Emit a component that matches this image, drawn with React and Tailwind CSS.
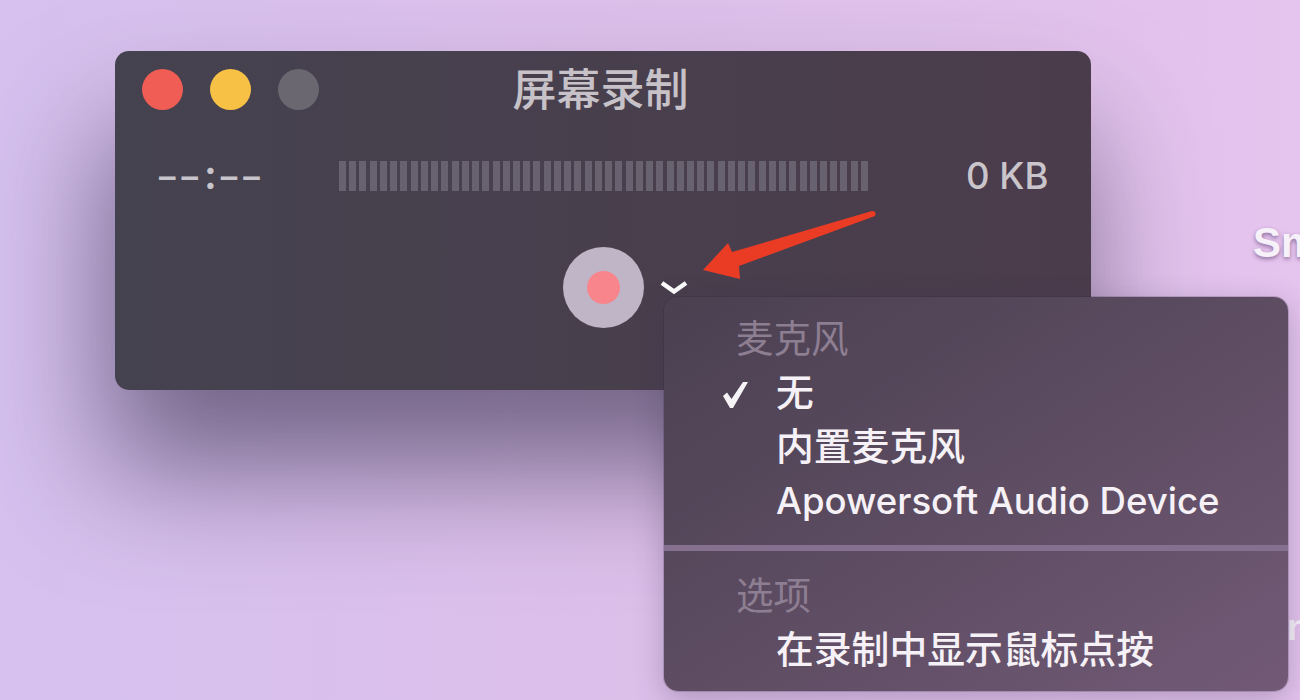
import React from 'react';

const BARS = Array.from({ length: 52 }, (_, i) => i);
const CJK = "font-['Inter','Noto_Sans_CJK_SC',sans-serif]";

const MenuHeader = ({ children }) => (
  <div className="flex h-[54px] items-center pb-[2px] pl-[72px] text-[37.5px] leading-none text-[#8d7e92]">{children}</div>
);

const MenuItem = ({ checked, children, className = 'text-[37.8px]' }) => (
  <div className={`relative flex h-[54px] items-center pb-[2px] pl-[112px] font-medium leading-none text-[#f5f1f6] ${className}`}>
    {checked && (
      <svg className="absolute left-[57px] top-[14px]" width="28" height="28" viewBox="0 0 28 28">
        <path d="M2 15 L6 11.5 L10.5 18 L22 1 L27 1 L12 27 L9 27 Z" fill="#f7f4f8" />
      </svg>
    )}
    {children}
  </div>
);

const RecorderWindow = () => (
  <div className="absolute left-[115px] top-[51px] h-[339px] w-[976px] rounded-[14px] bg-gradient-to-r from-[#45424f] via-[#483f4d] to-[#4b3c4c] shadow-[-10px_80px_120px_rgba(60,50,80,0.65)]">
    <div className="relative flex h-[59px] items-end gap-[27px] pl-[27px]">
      <span className="h-[41px] w-[41px] rounded-full bg-[#f05d54]" />
      <span className="h-[41px] w-[41px] rounded-full bg-[#f7c146]" />
      <span className="h-[41px] w-[41px] rounded-full bg-[#6b6770]" />
      <div className="absolute bottom-[-13px] left-0 right-[5px] text-center text-[44px] font-medium leading-[66px] text-[#c6c2c8]">屏幕录制</div>
    </div>
    <div className="mt-[51px] flex h-[30px] items-center">
      <div className="flex w-[224px] items-center pl-[44px] text-[33px] font-semibold leading-none tracking-[6px] text-[#c8c4cb]">
        ––<span className="mb-[3px] text-[40px] tracking-[4px]">:</span>––
      </div>
      <div className="flex h-[30px] w-[529px] justify-between">
        {BARS.map((i) => (
          <span key={i} className="h-full w-[7px] bg-[#68616f]" />
        ))}
      </div>
      <div className="ml-[98px] text-[36.5px] font-medium leading-none text-[#c9c5cb]">0 KB</div>
    </div>
    <div className="mt-[56px] flex justify-center">
      <div className="relative flex h-[81px] w-[81px] items-center justify-center rounded-full bg-[#c0b5c6]">
        <span className="h-[33px] w-[33px] rounded-full bg-[#f8858c]" />
        <svg className="absolute left-[96px] top-[32px]" width="30" height="18" viewBox="0 0 30 18">
          <path d="M3 4 L15 12.5 L27 4" fill="none" stroke="#ffffff" strokeWidth="4.5" strokeLinejoin="miter" />
        </svg>
      </div>
    </div>
  </div>
);

const MicMenu = () => (
  <div className="absolute left-[664px] top-[297px] w-[624px] overflow-hidden rounded-[14px] bg-gradient-to-br from-[#4a4050] via-[#5d4c62] to-[#725a76] pb-[13px] pt-[16px] shadow-[0_0_0_1px_rgba(40,30,50,0.18),0_8px_30px_rgba(60,50,80,0.3)]">
    <MenuHeader>麦克风</MenuHeader>
    <MenuItem checked>无</MenuItem>
    <MenuItem>内置麦克风</MenuItem>
    <MenuItem className="text-[36.6px]">Apowersoft Audio Device</MenuItem>
    <div className="mt-[16px] h-[6px] bg-[#85708f]" />
    <div className="mt-[19px]">
      <MenuHeader>选项</MenuHeader>
      <MenuItem>在录制中显示鼠标点按</MenuItem>
    </div>
  </div>
);

export default function App() {
  return (
    <div className={`relative h-[700px] w-[1300px] overflow-hidden bg-gradient-to-r from-[#d6c1ef] via-[#ddc0ea] to-[#e5c4ee] ${CJK}`}>
      <RecorderWindow />
      <div className="absolute left-[1253px] top-[222px] font-['Liberation_Sans',sans-serif] text-[42px] font-bold leading-none text-[#f7f2fa] [text-shadow:0_2px_4px_rgba(70,40,90,0.55)]">Sm</div>
      <div className="absolute left-[1287px] top-[610px] font-['Liberation_Sans',sans-serif] text-[36px] font-bold leading-none text-[#f7f2fa]">n</div>
      <MicMenu />
      <svg className="absolute left-[700px] top-[208px]" width="180" height="74" viewBox="0 0 180 74">
        <path d="M3 62 L28 35 L32 44 L172 3 Q177 3 175 8 L39 58 L40 71 Z" fill="#ea3c24" />
      </svg>
    </div>
  );
}
